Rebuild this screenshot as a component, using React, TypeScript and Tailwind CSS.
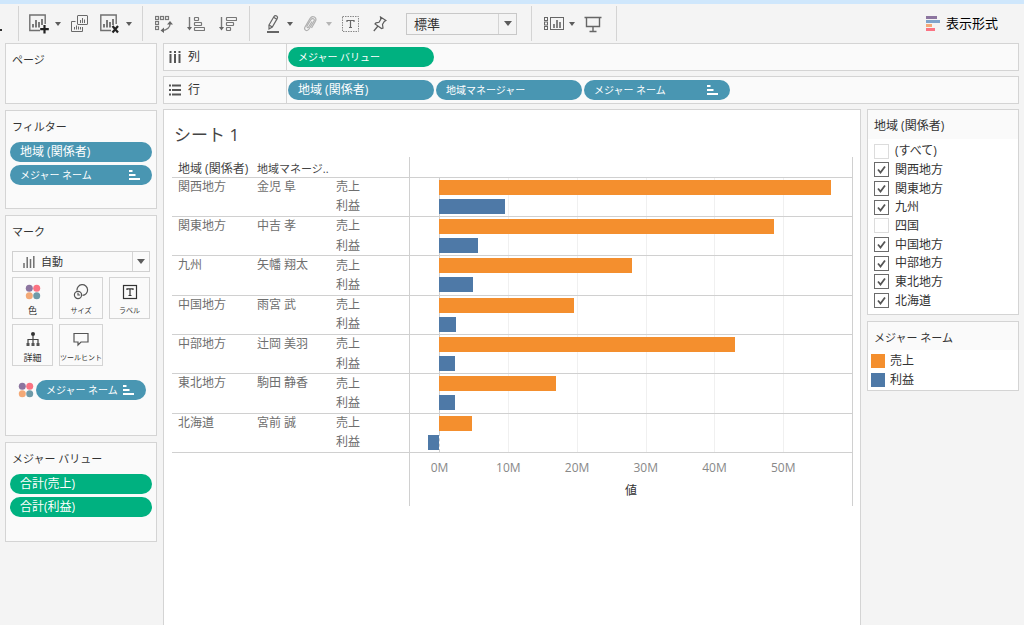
import React from "react";

type Measure = { name: string; value: number };

const MIN = -4.3;
const MAX = 60;
const ticks = [0, 10, 20, 30, 40, 50];

const regions = [
  { region: "関西地方", manager: "金児 阜", sales: 57, profit: 9.6 },
  { region: "関東地方", manager: "中吉 孝", sales: 48.6, profit: 5.6 },
  { region: "九州", manager: "矢幡 翔太", sales: 28, profit: 5 },
  { region: "中国地方", manager: "雨宮 武", sales: 19.6, profit: 2.4 },
  { region: "中部地方", manager: "辻岡 美羽", sales: 43, profit: 2.3 },
  { region: "東北地方", manager: "駒田 静香", sales: 17, profit: 2.3 },
  { region: "北海道", manager: "宮前 誠", sales: 4.75, profit: -1.6 },
];

const filterOptions = [
  { label: "(すべて)", checked: false },
  { label: "関西地方", checked: true },
  { label: "関東地方", checked: true },
  { label: "九州", checked: true },
  { label: "四国", checked: false },
  { label: "中国地方", checked: true },
  { label: "中部地方", checked: true },
  { label: "東北地方", checked: true },
  { label: "北海道", checked: true },
];

const toPercent = (value: number) => ((value - MIN) / (MAX - MIN)) * 100;

/* ===== Icons ===== */

const Caret = ({ light = false, large = false }: { light?: boolean; large?: boolean }) => (
  <svg
    width={large ? 8 : 6}
    height={large ? 5 : 4}
    viewBox="0 0 6 4"
    preserveAspectRatio="none"
    className="shrink-0"
  >
    <path d="M0 0H6L3 4Z" fill={light ? "#b5b5b5" : "#5c5c5c"} />
  </svg>
);

const NewSheetIcon = ({ remove = false }: { remove?: boolean }) => (
  <svg width="20" height="20" viewBox="0 0 20 20" fill="none">
    <path d="M11 16.5H0.8V1H16.2V10" stroke="#707070" strokeWidth="1.4" />
    <path d="M4 13.5V10M7 13.5V6M10 13.5V8M13 11V5" stroke="#5c5c5c" strokeWidth="1.6" />
    {remove ? (
      <path d="M12.5 12L18 18.5M18 12L12.5 18.5" stroke="#222" strokeWidth="2.2" />
    ) : (
      <path d="M15.5 11V19.5M11.2 15.2H19.8" stroke="#222" strokeWidth="2.2" />
    )}
  </svg>
);

const DuplicateIcon = () => (
  <svg width="18" height="18" viewBox="0 0 18 18" fill="none" stroke="#6a6a6a">
    <rect x="6.5" y="0.5" width="10" height="9" rx="0.5" />
    <path d="M4.5 6.5H0.5V16.5H11.5V12" />
    <path d="M9.5 8V5M11.5 8V3M13.5 8V4.5M3.5 14.5V12M5.5 14.5V10.5M7.5 14.5V11.5M9.5 14.5V12" />
  </svg>
);

const SwapIcon = () => (
  <svg width="18" height="18" viewBox="0 0 18 18" fill="none" stroke="#777" strokeWidth="1.2">
    <rect x="0.5" y="1.5" width="3" height="3" />
    <rect x="5.5" y="1.5" width="3" height="3" />
    <rect x="10.5" y="1.5" width="3" height="3" />
    <rect x="0.5" y="6.5" width="3" height="3" />
    <rect x="0.5" y="11.5" width="3" height="3" />
    <path d="M15 8C15.5 12 12 15.5 7 15.5" strokeWidth="1.3" />
    <path d="M12 9.5L15 6L18 9.5ZM9 12.5L5.5 15.5L9 18Z" fill="#666" stroke="none" />
  </svg>
);

const SortIcon = ({ descending = false }: { descending?: boolean }) => (
  <svg width="18" height="18" viewBox="0 0 18 18" fill="none" stroke="#777" strokeWidth="1.2">
    <path d="M2.5 2V13" strokeWidth="1.4" />
    <path d="M0 12H5L2.5 15.5Z" fill="#666" stroke="none" />
    {descending ? (
      <>
        <rect x="7.5" y="2.5" width="10" height="3" rx="0.5" />
        <rect x="7.5" y="7.5" width="7" height="3" rx="0.5" />
        <rect x="7.5" y="12.5" width="4" height="3" rx="0.5" />
      </>
    ) : (
      <>
        <rect x="7.5" y="2.5" width="4" height="3" rx="0.5" />
        <rect x="7.5" y="7.5" width="7" height="3" rx="0.5" />
        <rect x="7.5" y="12.5" width="10" height="3" rx="0.5" />
      </>
    )}
  </svg>
);

const HighlightIcon = () => (
  <svg width="14" height="20" viewBox="0 0 14 20" fill="none" stroke="#666" strokeWidth="1.2">
    <path d="M3 11L8 2.5Q9 1 10.7 2Q12.2 3 11.2 4.6L6.3 13L3 15Z" />
    <path d="M3 11L6.3 13M7.6 3.3L10.8 5.3" />
    <path d="M1 18H13" strokeWidth="2" />
  </svg>
);

const ClipIcon = () => (
  <svg width="14" height="18" viewBox="0 0 14 18" fill="none" stroke="#b0b0b0" strokeWidth="1.2">
    <path d="M4 11L8 4.5C9.5 2.5 12 4 11 6L6 14C4 17 0.5 15 2 12L7 3.5C9.5 -0.5 14.5 2.5 12.3 6.5L8.5 13" />
    <path d="M4 11C3.5 12.5 5 13 5.6 12L9 6.5" />
  </svg>
);

const LabelToggleIcon = () => (
  <svg width="17" height="16" viewBox="0 0 17 16" fill="none" stroke="#888">
    <rect x="0.5" y="0.5" width="16" height="15" strokeDasharray="1.5 1" />
    <path d="M5 6V4.5H12V6M8.5 4.5V11.5M7 11.5H10" stroke="#666" strokeWidth="1.2" />
  </svg>
);

const PinIcon = () => (
  <svg width="14" height="16" viewBox="0 0 14 16" fill="none" stroke="#5c5c5c" strokeWidth="1.2">
    <path d="M7.5 1L13 4.5L11.3 5.5L9.5 8.5L10 12L8.5 12.5L2 8L3 6.8L6 6.3L7.8 3.4Z" />
    <path d="M5 10L0.8 15" />
  </svg>
);

const ShowCardsIcon = () => (
  <svg width="20" height="16" viewBox="0 0 20 16" fill="none" stroke="#666">
    <rect x="0.5" y="1.5" width="3" height="3" />
    <rect x="0.5" y="6" width="3" height="3" />
    <rect x="0.5" y="10.5" width="3" height="3" />
    <rect x="6.5" y="1.5" width="13" height="12" />
    <path d="M10 12V8M13 12V4M16 12V6" strokeWidth="1.6" />
  </svg>
);

const PresentationIcon = () => (
  <svg width="18" height="18" viewBox="0 0 18 18" fill="none" stroke="#666">
    <path d="M0.5 2.5H17.5M2.5 2.5V11.5H15.5V2.5M9 11.5V16M5.5 16.5H12.5" strokeWidth="1.4" />
  </svg>
);

const ShowMeIcon = () => (
  <svg width="14" height="15" viewBox="0 0 14 15">
    <rect width="11" height="3" fill="#8c759f" />
    <rect y="4" width="14" height="3" fill="#7fa3cb" />
    <rect y="8" width="6" height="3" fill="#f3a977" />
    <rect y="12" width="9" height="3" fill="#fb7383" />
  </svg>
);

const DotsIcon = () => (
  <svg width="16" height="16" viewBox="0 0 16 16">
    <circle cx="4.3" cy="4.3" r="3.5" fill="#8c759f" />
    <circle cx="11.7" cy="4.3" r="3.5" fill="#fb7383" />
    <circle cx="4.3" cy="11.7" r="3.5" fill="#f3a977" />
    <circle cx="11.7" cy="11.7" r="3.5" fill="#6f9aa8" />
  </svg>
);

const SizeIcon = () => (
  <svg width="16" height="16" viewBox="0 0 16 16" fill="none" stroke="#555" strokeWidth="1.2">
    <path d="M4 6.5A5.3 5.3 0 1 1 9.5 11.3" />
    <circle cx="5" cy="11" r="3.6" />
    <path d="M5 8.8V11H7.2" />
  </svg>
);

const LabelIcon = () => (
  <svg width="16" height="16" viewBox="0 0 16 16" fill="none" stroke="#333" strokeWidth="1.2">
    <rect x="1.5" y="1.5" width="13" height="13" />
    <path d="M5 6V4.8H11V6M8 4.8V11.5M6.5 11.5H9.5" />
  </svg>
);

const DetailIcon = () => (
  <svg width="16" height="16" viewBox="0 0 16 16" fill="none" stroke="#444">
    <circle cx="8" cy="3" r="2" fill="#333" stroke="none" />
    <path d="M8 4V12M3 12V8.5H13V12" strokeWidth="1.2" />
    <path d="M1.5 12H4.5V15H1.5ZM6.5 12H9.5V15H6.5ZM11.5 12H14.5V15H11.5Z" fill="#555" stroke="none" />
  </svg>
);

const TooltipIcon = () => (
  <svg width="16" height="16" viewBox="0 0 16 16" fill="none" stroke="#555" strokeWidth="1.2">
    <path d="M1 2.5H15V11H8L5 14V11H1Z" />
  </svg>
);

const AutoIcon = () => (
  <svg width="12" height="12" viewBox="0 0 12 12" stroke="#707070" strokeWidth="1.5">
    <path d="M1 12V7M4.2 12V1M7.5 12V3M10.8 12V0" />
  </svg>
);

const ColumnsIcon = () => (
  <svg width="12" height="12" viewBox="0 0 12 12" fill="#555">
    <path d="M0.5 0H2.5V2H0.5ZM5 0H7V2H5ZM9.5 0H11.5V2H9.5ZM0.5 3H2.5V12H0.5ZM5 3H7V12H5ZM9.5 3H11.5V12H9.5Z" />
  </svg>
);

const RowsIcon = () => (
  <svg width="12" height="12" viewBox="0 0 12 12" fill="#555">
    <path d="M0 0.5H2V2.5H0ZM0 5H2V7H0ZM0 9.5H2V11.5H0ZM3 0.5H12V2.5H3ZM3 5H12V7H3ZM3 9.5H12V11.5H3Z" />
  </svg>
);

const PillSortIcon = () => (
  <svg width="11" height="11" viewBox="0 0 11 11" fill="#fff" className="shrink-0">
    <path d="M0 0H3.5V2H0ZM0 4H6.5V6H0ZM0 8H11V10H0Z" />
  </svg>
);

/* ===== Shared parts ===== */

const ToolButton = ({
  label,
  className = "",
  children,
}: {
  label: string;
  className?: string;
  children: React.ReactNode;
}) => (
  <button type="button" aria-label={label} className={`shrink-0 ${className}`}>
    {children}
  </button>
);

const Pill = ({
  label,
  green = false,
  sorted = false,
  small = false,
  className = "w-full",
}: {
  label: string;
  green?: boolean;
  sorted?: boolean;
  small?: boolean;
  className?: string;
}) => (
  <button
    type="button"
    className={`flex h-5 items-center justify-between rounded-full pl-[10px] text-left whitespace-nowrap text-white ${
      small ? "text-[10px]" : "text-xs"
    } ${sorted ? "pr-3" : "pr-[10px]"} ${green ? "bg-[#00b180]" : "bg-[#4996b2]"} ${className}`}
  >
    {label}
    {sorted && <PillSortIcon />}
  </button>
);

const Card = ({
  title,
  className,
  children,
}: {
  title: string;
  className: string;
  children?: React.ReactNode;
}) => (
  <section className={`border border-[#d4d4d4] bg-[#fafafa] px-1 ${className}`}>
    <h2 className="h-[31px] px-[2px] text-[11px] leading-8">{title}</h2>
    {children}
  </section>
);

const MarkButton = ({
  label,
  small = false,
  children,
}: {
  label: string;
  small?: boolean;
  children: React.ReactNode;
}) => (
  <button
    type="button"
    className={`flex h-[42px] flex-col items-center justify-between overflow-hidden border border-[#d4d4d4] pt-[6px] pb-[1px] whitespace-nowrap ${
      small ? "text-[7px]" : "text-[9px]"
    }`}
  >
    {children}
    <span className="leading-3">{label}</span>
  </button>
);

const Toolbar = () => (
  <header className="flex h-[39px] items-center pt-[2px] pb-[2px]">
    <div className="flex h-full w-[19px] shrink-0 items-center border-r border-[#d4d4d4]">
      <span className="mt-3 h-[2px] w-[2px] bg-[#333]" />
    </div>
    <div className="flex h-full shrink-0 items-center border-r border-[#d4d4d4] px-[10px]">
      <ToolButton label="新しいワークシート"><NewSheetIcon /></ToolButton>
      <ToolButton label="新規メニュー" className="ml-[6px]"><Caret /></ToolButton>
      <ToolButton label="複製" className="ml-[10px]"><DuplicateIcon /></ToolButton>
      <ToolButton label="シートのクリア" className="ml-[11px]"><NewSheetIcon remove /></ToolButton>
      <ToolButton label="クリアメニュー" className="ml-[6px]"><Caret /></ToolButton>
    </div>
    <div className="flex h-full shrink-0 items-center gap-[14px] border-r border-[#d4d4d4] px-3">
      <ToolButton label="行と列の交換"><SwapIcon /></ToolButton>
      <ToolButton label="昇順で並べ替え"><SortIcon /></ToolButton>
      <ToolButton label="降順で並べ替え"><SortIcon descending /></ToolButton>
    </div>
    <div className="flex h-full shrink-0 items-center border-r border-[#d4d4d4] pr-[14px] pl-4">
      <ToolButton label="ハイライト"><HighlightIcon /></ToolButton>
      <ToolButton label="ハイライトメニュー" className="ml-[7px]"><Caret /></ToolButton>
      <ToolButton label="グループ" className="ml-[10px]"><ClipIcon /></ToolButton>
      <ToolButton label="グループメニュー" className="ml-[9px]"><Caret light /></ToolButton>
      <ToolButton label="マークラベルの表示" className="ml-[10px]"><LabelToggleIcon /></ToolButton>
      <ToolButton label="軸の固定" className="ml-[14px]"><PinIcon /></ToolButton>
      <div className="relative ml-[19px]">
        <select
          aria-label="表示サイズ"
          className="block h-[22px] w-[111px] appearance-none border border-[#c8c8c8] pl-[7px] text-[13px] leading-5"
        >
          <option>標準</option>
        </select>
        <span className="pointer-events-none absolute inset-y-[1px] right-[1px] flex w-[18px] items-center justify-center border-l border-[#d4d4d4]">
          <Caret large />
        </span>
      </div>
    </div>
    <div className="flex h-full shrink-0 items-center border-r border-[#d4d4d4] pr-[14px] pl-3">
      <ToolButton label="カードの表示"><ShowCardsIcon /></ToolButton>
      <ToolButton label="カードメニュー" className="ml-[5px]"><Caret /></ToolButton>
      <ToolButton label="プレゼンテーション" className="ml-[9px]"><PresentationIcon /></ToolButton>
    </div>
    <button type="button" className="mr-[26px] ml-auto flex items-center gap-[6px] text-[13px] text-black">
      <ShowMeIcon />
      表示形式
    </button>
  </header>
);

const Sidebar = () => (
  <aside className="flex w-[152px] shrink-0 flex-col gap-[6px]">
    <Card title="ページ" className="h-[61px]" />
    <Card title="フィルター" className="h-[99px]">
      <div className="flex flex-col gap-[3px]">
        <Pill label="地域 (関係者)" />
        <Pill label="メジャー ネーム" small sorted />
      </div>
    </Card>
    <Card title="マーク" className="h-[221px]">
      <div className="px-[2px] pt-1">
        <div className="relative">
          <select
            aria-label="マークタイプ"
            className="block h-[21px] w-full appearance-none border border-[#d0d0d0] pl-7 text-[11px] leading-[19px]"
          >
            <option>自動</option>
          </select>
          <span className="pointer-events-none absolute inset-y-0 left-[11px] flex items-center">
            <AutoIcon />
          </span>
          <span className="pointer-events-none absolute inset-y-[1px] right-[1px] flex w-[17px] items-center justify-center border-l border-[#d4d4d4]">
            <Caret large />
          </span>
        </div>
        <div className="mt-[5px] grid grid-cols-[1fr_44px_1fr] gap-x-[6px] gap-y-[5px]">
          <MarkButton label="色"><DotsIcon /></MarkButton>
          <MarkButton label="サイズ" small><SizeIcon /></MarkButton>
          <MarkButton label="ラベル" small><LabelIcon /></MarkButton>
          <MarkButton label="詳細"><DetailIcon /></MarkButton>
          <MarkButton label="ツールヒント" small><TooltipIcon /></MarkButton>
        </div>
      </div>
      <div className="mt-[14px] flex items-center gap-[2px] pr-[6px] pl-2">
        <DotsIcon />
        <Pill label="メジャー ネーム" small sorted className="flex-1" />
      </div>
    </Card>
    <Card title="メジャー バリュー" className="h-[100px]">
      <div className="flex flex-col gap-[3px]">
        <Pill label="合計(売上)" green />
        <Pill label="合計(利益)" green />
      </div>
    </Card>
  </aside>
);

const Shelf = ({
  label,
  icon,
  children,
}: {
  label: string;
  icon: React.ReactNode;
  children: React.ReactNode;
}) => (
  <div className="flex h-7 items-stretch border border-[#d4d4d4] bg-[#fafafa]">
    <div className="flex w-[123px] shrink-0 items-center gap-[7px] border-r border-[#d4d4d4] pl-[5px] text-xs">
      {icon}
      {label}
    </div>
    <div className="flex items-center gap-[2px] pl-[1px]">{children}</div>
  </div>
);

const Bar = ({ name, value }: Measure) => (
  <div className="relative flex h-full items-center">
    {ticks.map((tick) => (
      <span
        key={tick}
        className={`absolute inset-y-0 border-l ${
          tick === 0 ? "border-dashed border-[#cfcfcf]" : "border-[#f0f0f0]"
        }`}
        style={{ left: `${toPercent(tick)}%` }}
      />
    ))}
    <div
      role="img"
      aria-label={`${name} ${value}M`}
      className={`relative h-[15px] ${name === "売上" ? "bg-[#f48f2e]" : "bg-[#4e79a7]"}`}
      style={{
        marginLeft: `${toPercent(Math.min(0, value))}%`,
        width: `${toPercent(Math.abs(value)) - toPercent(0)}%`,
      }}
    />
  </div>
);

const Sheet = () => (
  <main className="min-w-0 flex-1 border border-b-0 border-[#d4d4d4] bg-white pr-[7px] pl-2">
    <h1 className="h-[47px] pl-[2px] text-[17px] leading-[50px] text-[#444]">シート 1</h1>
    <table className="h-[296px] w-full table-fixed border-collapse text-left text-xs leading-4 text-[#6e6e6e]">
      <colgroup>
        <col className="w-[79px]" />
        <col className="w-[79px]" />
        <col className="w-[79px]" />
        <col />
      </colgroup>
      <thead>
        <tr className="h-5 border-b border-[#d0d0d0] whitespace-nowrap text-[#444]">
          <th className="p-0 pl-[6px] align-bottom font-normal">地域 (関係者)</th>
          <th className="p-0 pl-[6px] align-bottom text-[11px] font-normal">地域マネージ..</th>
          <th className="p-0" />
          <th className="border-x border-[#d0d0d0] p-0" />
        </tr>
      </thead>
      <tbody>
        {regions.map((row) => (
          <React.Fragment key={row.region}>
            <tr>
              <td rowSpan={2} className="border-b border-[#d0d0d0] p-0 pt-[1px] pl-[6px] align-top">{row.region}</td>
              <td rowSpan={2} className="border-b border-[#d0d0d0] p-0 pt-[1px] pl-[6px] align-top">{row.manager}</td>
              <td className="p-0 pl-[6px]">売上</td>
              <td className="h-[19px] border-x border-[#d0d0d0] p-0">
                <Bar name="売上" value={row.sales} />
              </td>
            </tr>
            <tr className="border-b border-[#d0d0d0]">
              <td className="p-0 pl-[6px]">利益</td>
              <td className="h-[19px] border-x border-[#d0d0d0] p-0">
                <Bar name="利益" value={row.profit} />
              </td>
            </tr>
          </React.Fragment>
        ))}
      </tbody>
    </table>
    {/* Axis */}
    <div className="ml-[237px] h-[53px] border-x border-[#d0d0d0]">
      <div className="relative h-[30px] text-xs leading-[30px] text-[#888]">
        {ticks.map((tick) => (
          <span
            key={tick}
            className="absolute flex w-10 -translate-x-1/2 justify-center"
            style={{ left: `${toPercent(tick)}%` }}
          >
            {tick}M
          </span>
        ))}
      </div>
      <p className="text-center text-xs leading-4 text-[#333]">値</p>
    </div>
  </main>
);

const FilterCard = () => (
  <fieldset className="border border-[#d4d4d4] bg-white">
    <legend className="float-left h-[29px] w-full bg-[#fafafa] pl-[6px] text-xs leading-[31px]">
      地域 (関係者)
    </legend>
    <div className="clear-both grid h-[175px] grid-rows-9 pt-[3px] pb-1 pl-[6px]">
      {filterOptions.map((option) => (
        <label key={option.label} className="flex items-center gap-[6px] text-xs leading-4">
          <span className="relative flex">
            <input
              type="checkbox"
              defaultChecked={option.checked}
              className="peer h-[15px] w-[15px] appearance-none border border-[#dcdcdc] bg-white checked:border-[#6b6b6b]"
            />
            <svg
              viewBox="0 0 15 15"
              fill="none"
              stroke="#555"
              strokeWidth="1.8"
              className="pointer-events-none absolute inset-0 hidden h-[15px] w-[15px] peer-checked:block"
            >
              <path d="M4 7.5L6.5 10.5L11 4.5" />
            </svg>
          </span>
          {option.label}
        </label>
      ))}
    </div>
  </fieldset>
);

const LegendCard = () => (
  <section className="border border-[#d4d4d4] bg-white">
    <h2 className="h-7 bg-[#fafafa] pl-[6px] text-[11px] leading-8">メジャー ネーム</h2>
    <ul className="flex flex-col gap-[3px] pt-[3px] pb-[2px] pl-[3px] text-xs leading-4">
      <li className="flex items-center gap-[5px]">
        <span className="h-[14px] w-[14px] bg-[#f48f2e]" />
        売上
      </li>
      <li className="flex items-center gap-[5px]">
        <span className="h-[14px] w-[14px] bg-[#4e79a7]" />
        利益
      </li>
    </ul>
  </section>
);

const App = () => {
  return (
    <div className="flex min-h-screen flex-col border-t-4 border-[#cfe7fc] bg-[#f4f4f4] font-['Open_Sans','Noto_Sans_CJK_JP',sans-serif] text-[#333]">
      <Toolbar />
      <div className="flex flex-1 gap-[6px] px-[5px]">
        <Sidebar />
        <div className="flex min-w-0 flex-1 flex-col gap-[5px]">
          <Shelf label="列" icon={<ColumnsIcon />}>
            <Pill label="メジャー バリュー" green small className="w-[146px]" />
          </Shelf>
          <Shelf label="行" icon={<RowsIcon />}>
            <Pill label="地域 (関係者)" className="w-[146px]" />
            <Pill label="地域マネージャー" small className="w-[146px]" />
            <Pill label="メジャー ネーム" small sorted className="w-[146px]" />
          </Shelf>
          <div className="flex flex-1 gap-[6px]">
            <Sheet />
            <aside className="flex w-[152px] shrink-0 flex-col gap-[6px]">
              <FilterCard />
              <LegendCard />
            </aside>
          </div>
        </div>
      </div>
    </div>
  );
};

export default App;
